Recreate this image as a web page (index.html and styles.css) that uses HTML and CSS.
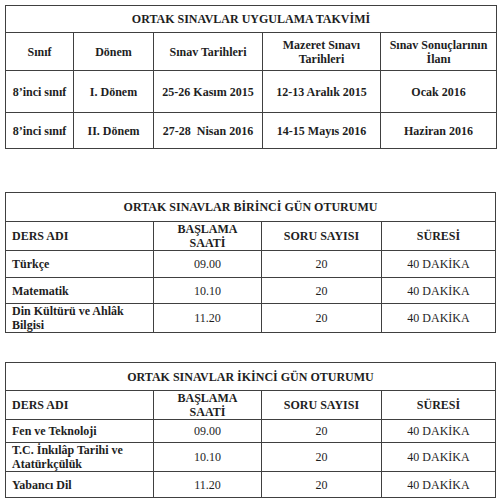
FILE: index.html
```html
<!DOCTYPE html>
<html lang="tr">
<head>
  <meta charset="UTF-8" />
  <title>Ortak Sınavlar</title>
  <link rel="stylesheet" href="styles.css">
</head>
<body>
  <div class="sayfa">
    <table class="takvim">
      <colgroup>
        <col style="width:68px"><col style="width:80px"><col style="width:109px"><col style="width:118px"><col style="width:116px">
      </colgroup>
      <tr class="baslik"><td colspan="5">ORTAK SINAVLAR UYGULAMA TAKVİMİ</td></tr>
      <tr class="ust"><td>Sınıf</td><td>Dönem</td><td>Sınav Tarihleri</td><td>Mazeret Sınavı<br>Tarihleri</td><td>Sınav Sonuçlarının<br>İlanı</td></tr>
      <tr class="satir1"><td>8’inci sınıf</td><td>I. Dönem</td><td>25-26 Kasım 2015</td><td>12-13 Aralık 2015</td><td>Ocak 2016</td></tr>
      <tr class="satir2"><td>8’inci sınıf</td><td>II. Dönem</td><td>27-28&nbsp; Nisan 2016</td><td>14-15 Mayıs 2016</td><td>Haziran 2016</td></tr>
    </table>

    <table class="oturum birinci">
      <colgroup>
        <col style="width:148px"><col style="width:108px"><col style="width:120px"><col style="width:114px">
      </colgroup>
      <tr class="baslik"><td colspan="4">ORTAK SINAVLAR BİRİNCİ GÜN OTURUMU</td></tr>
      <tr class="ust"><td class="ders">DERS ADI</td><td>BAŞLAMA<br>SAATİ</td><td>SORU SAYISI</td><td>SÜRESİ</td></tr>
      <tr class="r1"><td class="ders">Türkçe</td><td>09.00</td><td>20</td><td>40 DAKİKA</td></tr>
      <tr class="r2"><td class="ders">Matematik</td><td>10.10</td><td>20</td><td>40 DAKİKA</td></tr>
      <tr class="r3"><td class="ders">Din Kültürü ve Ahlâk<br>Bilgisi</td><td>11.20</td><td>20</td><td>40 DAKİKA</td></tr>
    </table>

    <table class="oturum ikinci">
      <colgroup>
        <col style="width:148px"><col style="width:108px"><col style="width:120px"><col style="width:114px">
      </colgroup>
      <tr class="baslik"><td colspan="4">ORTAK SINAVLAR İKİNCİ GÜN OTURUMU</td></tr>
      <tr class="ust"><td class="ders">DERS ADI</td><td>BAŞLAMA<br>SAATİ</td><td>SORU SAYISI</td><td>SÜRESİ</td></tr>
      <tr class="r1"><td class="ders">Fen ve Teknoloji</td><td>09.00</td><td>20</td><td>40 DAKİKA</td></tr>
      <tr class="r2"><td class="ders">T.C. İnkılâp Tarihi ve<br>Atatürkçülük</td><td>10.10</td><td>20</td><td>40 DAKİKA</td></tr>
      <tr class="r3"><td class="ders">Yabancı Dil</td><td>11.20</td><td>20</td><td>40 DAKİKA</td></tr>
    </table>
  </div>
</body>
</html>
```

FILE: styles.css
```css
body {
  margin: 0;
  padding: 0;
  background: #ffffff;
  font-family: "Liberation Serif", "Times New Roman", serif;
  color: #1e1e1e;
}
.sayfa {
  padding: 5px 4px 0 5px;
}
table {
  border-collapse: collapse;
  table-layout: fixed;
  font-size: 12px;
  line-height: 14px;
}
td {
  border: 1px solid #404040;
  padding: 0 2px;
  text-align: center;
  vertical-align: middle;
  font-weight: bold;
  white-space: nowrap;
}
.takvim {
  width: 491px;
}
.takvim .baslik { height: 27px; }
.takvim .ust { height: 38px; }
.takvim .satir1 { height: 42px; }
.takvim .satir2 { height: 36px; }

.oturum {
  width: 490px;
}
.oturum td {
  font-weight: normal;
}
.oturum .baslik td,
.oturum .ust td,
.oturum td.ders {
  font-weight: bold;
}
.oturum td.ders {
  text-align: left;
  padding-left: 6px;
}
.birinci {
  margin-top: 43px;
}
.birinci .baslik { height: 29px; }
.birinci .ust { height: 28px; }
.birinci .r1 { height: 27px; }
.birinci .r2 { height: 26px; }
.birinci .r3 { height: 28px; }

.ikinci {
  margin-top: 29px;
}
.ikinci .baslik { height: 28px; }
.ikinci .ust { height: 29px; }
.ikinci .r1 { height: 23px; }
.ikinci .r2 { height: 28px; }
.ikinci .r3 { height: 26px; }
```
